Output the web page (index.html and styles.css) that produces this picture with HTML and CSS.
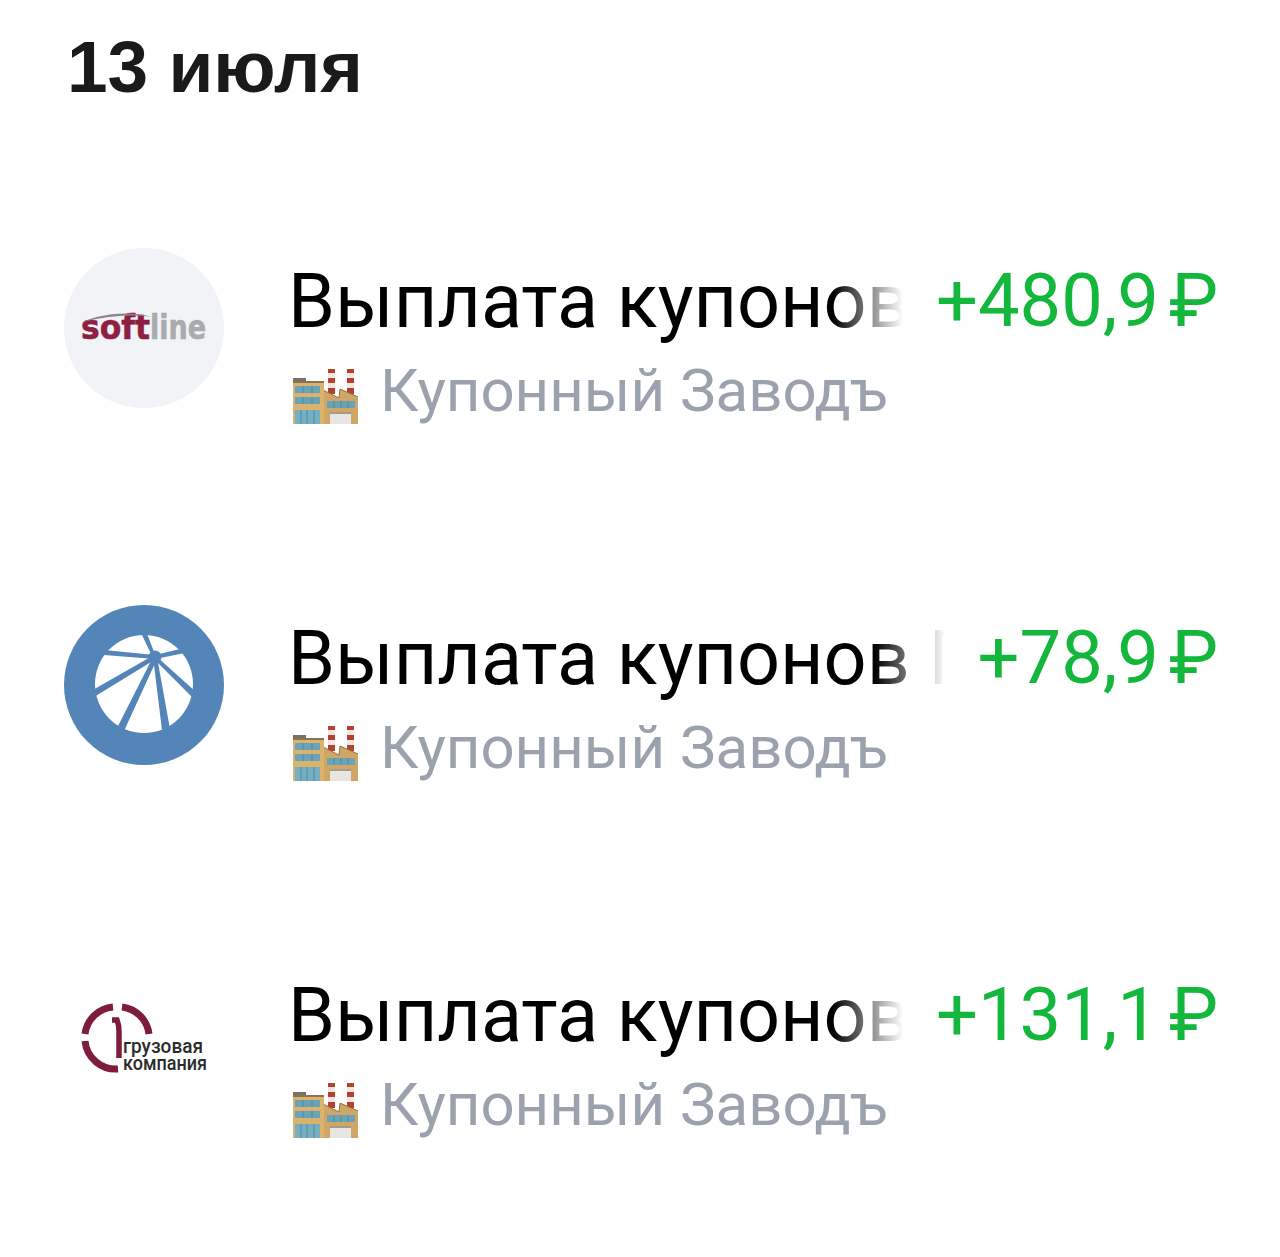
FILE: index.html
```html
<!DOCTYPE html>
<html lang="ru">
<head>
<meta charset="utf-8">
<title>13 июля</title>
<link rel="stylesheet" href="styles.css">
</head>
<body>
<svg class="defs" width="0" height="0" aria-hidden="true">
  <symbol id="factory" viewBox="0 0 68 56">
    <rect x="36" y="1" width="7" height="25" fill="#eee8e0"/>
    <rect x="36" y="1" width="7" height="4" fill="#b8402f"/>
    <rect x="36" y="10" width="7" height="5" fill="#b8402f"/>
    <rect x="36" y="20" width="7" height="6" fill="#b8402f"/>
    <rect x="55" y="1" width="7" height="28" fill="#eee8e0"/>
    <rect x="55" y="1" width="7" height="4" fill="#b8402f"/>
    <rect x="55" y="10" width="7" height="5" fill="#b8402f"/>
    <rect x="55" y="20" width="7" height="6" fill="#b8402f"/>
    <path d="M31 22 47 30 48 21 66 29V56H31Z" fill="#cfa663"/>
    <path d="M31 22 47 30 48 21 66 29" fill="none" stroke="#8a7350" stroke-width="1"/>
    <rect x="1" y="10" width="13" height="3" fill="#77716a"/>
    <rect x="1" y="13" width="31" height="43" fill="#dcb36c"/>
    <rect x="1" y="13" width="31" height="2" fill="#8a7350"/>
    <rect x="3" y="18" width="25" height="7" fill="#6aa3b8"/>
    <rect x="3" y="29" width="25" height="7" fill="#6aa3b8"/>
    <rect x="3" y="42" width="25" height="14" fill="#74afc2"/>
    <path d="M11 18v7M20 18v7M11 29v7M20 29v7M9 42v14M15 42v14M22 42v14" stroke="#4f8296" stroke-width=".8"/>
    <rect x="35" y="33" width="28" height="7" fill="#6aa3b8"/>
    <path d="M42 33v7M49 33v7M56 33v7" stroke="#4f8296" stroke-width=".8"/>
    <rect x="38" y="44" width="21" height="12" fill="#e8e6e2"/>
    <rect x="38" y="44" width="21" height="2" fill="#a49b8c"/>
  </symbol>
</svg>

<main class="page">
  <h1 class="date">13 июля</h1>

  <section class="op">
    <svg class="avatar" viewBox="0 0 160 160" role="img" aria-label="Softline">
      <circle cx="80" cy="80" r="80" fill="#f1f3f6"/>
      <text class="logo-soft" x="17" y="91" textLength="69" lengthAdjust="spacingAndGlyphs">soft</text>
      <text class="logo-line" x="86" y="91" textLength="56" lengthAdjust="spacingAndGlyphs">line</text>
      <path d="M19 74C38 65 68 63 88 69 66 66 42 68 19 74Z" fill="#8c8488"/>
    </svg>
    <div class="info">
      <div class="name">Выплата купонов Софтлайн</div>
      <div class="source"><svg class="emoji"><use href="#factory"/></svg><span>Купонный Заводъ</span></div>
    </div>
    <div class="sum">+480,9<span class="rub">₽</span></div>
  </section>

  <section class="op">
    <svg class="avatar" viewBox="0 0 160 160" role="img" aria-label="Газпром">
      <circle cx="80" cy="80" r="80" fill="#5485b9"/>
      <circle cx="80" cy="79" r="49" fill="#fff"/>
      <g fill="#5485b9">
        <path d="M91 50 40 45V50L91 54Z"/>
        <path d="M92 52 82 26 77 28 89 53Z"/>
        <path d="M91 50 120 43 121 48 91 54Z"/>
        <path d="M92 51 132 87 128 92 90 54Z"/>
        <path d="M89 52 98 125 106 124 93 52Z"/>
        <path d="M89 52 53 123 60 126 93 54Z"/>
        <path d="M90 50 27 86 30 92 92 54Z"/>
      </g>
      <circle cx="91" cy="52" r="6.5" fill="#5485b9"/>
    </svg>
    <div class="info">
      <div class="name">Выплата купонов Газпром</div>
      <div class="source"><svg class="emoji"><use href="#factory"/></svg><span>Купонный Заводъ</span></div>
    </div>
    <div class="sum">+78,9<span class="rub">₽</span></div>
  </section>

  <section class="op">
    <svg class="avatar" viewBox="0 0 160 160" role="img" aria-label="Первая грузовая компания">
      <g class="pgk-mark" fill="none" stroke="#7e1c3e" stroke-width="7">
        <path d="M49 22A31 31 0 0 0 21 49"/>
        <path d="M21 56A31 31 0 0 0 54 84"/>
        <path d="M58 22A31 31 0 0 1 85 49"/>
        <path d="M48 35H53Q55 40 55 46V73" stroke-width="5.5"/>
      </g>
      <text class="logo-pgk" x="59" y="91" textLength="80" lengthAdjust="spacingAndGlyphs">грузовая</text>
      <text class="logo-pgk" x="59" y="108" textLength="84" lengthAdjust="spacingAndGlyphs">компания</text>
    </svg>
    <div class="info">
      <div class="name">Выплата купонов ПГК</div>
      <div class="source"><svg class="emoji"><use href="#factory"/></svg><span>Купонный Заводъ</span></div>
    </div>
    <div class="sum">+131,1<span class="rub">₽</span></div>
  </section>
</main>
</body>
</html>
```
FILE: styles.css
```css
* { box-sizing: border-box; }
html, body { margin: 0; background: #fff; }
body { font-family: Roboto, "Noto Sans", sans-serif; }
.defs { position: absolute; }
.page { width: 1280px; height: 1257px; padding: 31px 64px 0; overflow: hidden; }
.date {
  margin: 0 0 145px 3px;
  font-family: "Liberation Sans", Arial, sans-serif;
  font-size: 73px;
  line-height: 72px;
  font-weight: 700;
  color: #1a1a1a;
}
.op { display: flex; align-items: flex-start; margin-bottom: 197px; height: 160px; }
.avatar { flex: none; width: 160px; height: 160px; margin-right: 64px; }
.info { flex: 1; min-width: 0; padding-top: 9px; }
.name {
  font-size: 75.5px;
  line-height: 88px;
  color: #000;
  white-space: nowrap;
  overflow: hidden;
  -webkit-mask-image: linear-gradient(to right, #000 calc(100% - 70px), transparent);
  mask-image: linear-gradient(to right, #000 calc(100% - 70px), transparent);
}
.source {
  display: flex;
  align-items: center;
  gap: 20px;
  margin-top: 10px;
  font-size: 60px;
  line-height: 72px;
  color: #9ca2ad;
  white-space: nowrap;
}
.emoji { flex: none; width: 68px; height: 56px; margin: 10px 0 0 4px; }
.sum {
  flex: none;
  margin-left: 33px;
  padding-top: 9px;
  font-size: 74px;
  line-height: 88px;
  color: #12b73b;
  white-space: nowrap;
}
.rub { margin: 0 -2px 0 10px; }
.pgk-mark { transform: translateY(23px); }
.logo-soft { font: 700 33px "DejaVu Sans", sans-serif; fill: #8f1f42; stroke: #8f1f42; stroke-width: .6px; }
.logo-line { font: 700 33px "DejaVu Sans", sans-serif; fill: #a9abae; stroke: #a9abae; stroke-width: .6px; }
.logo-pgk { font: 500 21px Roboto, sans-serif; fill: #2b2b2b; }
```
